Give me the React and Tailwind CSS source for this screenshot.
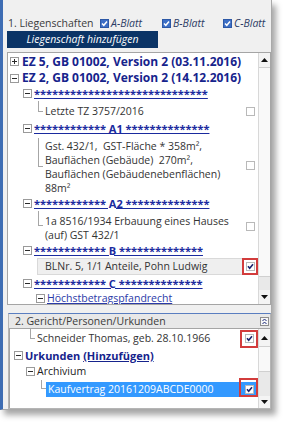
import React from 'react';

function Exp({ minus }) {
  return (
    <svg width="9" height="9" viewBox="0 0 9 9" className="block shrink-0">
      <rect x="0.5" y="0.5" width="8" height="8" fill="#ffffff" stroke="#9a9a9a" />
      <line x1="2" y1="4.5" x2="7" y2="4.5" stroke="#2a2a2a" />
      {!minus && <line x1="4.5" y1="2" x2="4.5" y2="7" stroke="#2a2a2a" />}
    </svg>
  );
}

function Cb({ checked }) {
  return (
    <svg width="9" height="9" viewBox="0 0 9 9" className="block shrink-0">
      <rect x="0.5" y="0.5" width="8" height="8" fill="#ffffff" stroke="#b9b9b9" />
      {checked && (
        <path d="M2 4.3 L3.7 6.3 L7 2.3" fill="none" stroke="#18246e" strokeWidth="1.6" />
      )}
    </svg>
  );
}

function BlueCb() {
  return (
    <svg width="9" height="9" viewBox="0 0 9 9" className="block shrink-0">
      <rect x="0.5" y="0.5" width="8" height="8" fill="#3d6fc6" stroke="#2c58a6" />
      <path d="M2 4.5 L3.8 6.3 L7 2.6" fill="none" stroke="#ffffff" strokeWidth="1.5" />
    </svg>
  );
}

function Arrow({ up }) {
  return (
    <svg width="7" height="4" viewBox="0 0 7 4" className="block">
      {up ? <polygon points="0,4 7,4 3.5,0" fill="#111" /> : <polygon points="0,0 7,0 3.5,4" fill="#111" />}
    </svg>
  );
}

function Collapse() {
  return (
    <svg width="9" height="9" viewBox="0 0 9 9" className="block">
      <rect x="0.5" y="0.5" width="8" height="8" fill="#f7f7f7" stroke="#8e8e8e" />
      <path d="M2.5 4 L4.5 2 L6.5 4 M2.5 7 L4.5 5 L6.5 7" fill="none" stroke="#1c2a7a" strokeWidth="1" />
    </svg>
  );
}

const stars = (n) => '*'.repeat(n);

function StarRow({ label, h }) {
  return (
    <div className={`flex items-center pl-[15px] ${h}`}>
      <Exp minus />
      <span className="ml-[2px] font-bold text-[11px] leading-none text-[#1a2a9e] underline decoration-1 underline-offset-[0px] whitespace-pre">
        {label}
      </span>
    </div>
  );
}

export default function App() {
  return (
    <div className="w-[285px] h-[429px] bg-white font-['Open_Sans',sans-serif] text-[10.5px]">
      <div className="w-[272px] h-[410px] flex flex-col bg-[#f0f0f0] border-l-[3px] border-l-[#3e6db3] border-r border-r-[#a9a9a9] border-b border-b-[#a9a9a9] shadow-[4px_5px_6px_rgba(0,0,0,0.35)]">
        {/* header */}
        <div className="mt-[16px] h-[14px] flex items-center pl-[5px] text-[#3b3b3b] leading-none">
          <span className="w-[92px]">1. Liegenschaften</span>
          <div className="w-[62px] flex items-center gap-[2px]">
            <BlueCb />
            <span className="italic text-[#2d3d66]">A-Blatt</span>
          </div>
          <div className="w-[61px] flex items-center gap-[2px]">
            <BlueCb />
            <span className="italic text-[#2d3d66]">B-Blatt</span>
          </div>
          <div className="flex items-center gap-[2px]">
            <BlueCb />
            <span className="italic text-[#2d3d66]">C-Blatt</span>
          </div>
        </div>

        <div className="mt-[1px] ml-[4px] w-[151px] h-[17px] bg-[#0b3466] text-white italic flex items-center justify-center leading-none">
          Liegenschaft hinzufügen
        </div>

        {/* panel 1 */}
        <div className="mt-[4px] ml-[4px] w-[264px] h-[253px] bg-white border border-[#a5a5a5] flex overflow-hidden">
          <div className="w-[250px] flex flex-col text-[#333] overflow-hidden">
            <div className="h-[17px] shrink-0 flex items-center pl-[2px]">
              <Exp />
              <span className="ml-[3px] font-bold text-[12px] leading-none text-[#16238c] whitespace-nowrap">
                EZ 5, GB 01002, Version 2 (03.11.2016)
              </span>
            </div>
            <div className="h-[16px] shrink-0 flex items-center pl-[2px]">
              <Exp minus />
              <span className="ml-[3px] font-bold text-[12px] leading-none text-[#16238c] whitespace-nowrap">
                EZ 2, GB 01002, Version 2 (14.12.2016)
              </span>
            </div>
            <StarRow h="h-[15px] shrink-0" label={stars(29)} />

            <div className="h-[20px] shrink-0 flex items-center">
              <div className="w-[30px]" />
              <div className="w-[5px] h-[11px] self-start border-l border-b border-[#a6a6a6]" />
              <span className="ml-[2px] flex-1 leading-none">Letzte TZ 3757/2016</span>
              <div className="w-[18px] flex justify-end pr-[3px]">
                <Cb />
              </div>
            </div>

            <StarRow h="h-[15px] shrink-0" label={`${stars(12)} A1 ${stars(14)}`} />

            <div className="h-[59px] shrink-0 flex items-center">
              <div className="w-[30px]" />
              <div className="w-[5px] h-[29px] self-start mt-[2px] border-l border-b border-[#a6a6a6]" />
              <div className="ml-[2px] flex-1 self-start pt-[3px] leading-[14px] whitespace-pre">
                <div>Gst. 432/1,  GST-Fläche * 358m²,</div>
                <div>Bauflächen (Gebäude)  270m²,</div>
                <div>Bauflächen (Gebäudenebenflächen)</div>
                <div>88m²</div>
              </div>
              <div className="w-[18px] flex justify-end pr-[3px]">
                <Cb />
              </div>
            </div>

            <StarRow h="h-[16px] shrink-0" label={`${stars(12)} A2 ${stars(14)}`} />

            <div className="h-[31px] shrink-0 flex items-center">
              <div className="w-[30px]" />
              <div className="w-[5px] h-[15px] self-start border-l border-b border-[#a6a6a6]" />
              <div className="ml-[2px] flex-1 self-start pt-[3px] leading-[14px] whitespace-pre">
                <div>1a 8516/1934 Erbauung eines Hauses</div>
                <div>(auf) GST 432/1</div>
              </div>
              <div className="w-[18px] flex justify-end pr-[3px]">
                <Cb />
              </div>
            </div>

            <StarRow h="h-[16px] shrink-0" label={`${stars(12)} B ${stars(14)}`} />

            <div className="h-[17px] shrink-0 flex items-stretch">
              <div className="w-[29px]" />
              <div className="flex-1 bg-[#efefef] border border-r-0 border-[#d9d9d9] flex items-center pl-[7px] leading-none">
                BLNr. 5, 1/1 Anteile, Pohn Ludwig
              </div>
              <div className="w-[16px] h-[17px] border-2 border-[#d23c3c] flex items-center justify-center">
                <Cb checked />
              </div>
            </div>

            <StarRow h="h-[16px] shrink-0" label={`${stars(12)} C ${stars(14)}`} />

            <div className="h-[14px] shrink-0 flex items-center pl-[28px]">
              <Exp minus />
              <span className="ml-[2px] leading-none text-[#2b3aa8] underline underline-offset-[1px]">
                Höchstbetragspfandrecht
              </span>
            </div>
          </div>

          {/* scrollbar 1 */}
          <div className="w-[12px] flex flex-col bg-[#e9e9e9] border-l border-[#d8d8d8]">
            <div className="h-[14px] flex items-center justify-center bg-[#f4f4f4]">
              <Arrow up />
            </div>
            <div className="h-[210px] bg-[#f9f9f9] border-y border-[#d0d0d0]" />
            <div className="flex-1" />
            <div className="h-[14px] flex items-center justify-center bg-[#f4f4f4]">
              <Arrow />
            </div>
          </div>
        </div>

        {/* section 2 */}
        <div className="mt-[8px] ml-[5px] w-[263px] h-[96px] flex flex-col border border-[#b5b5b5] border-t-[#5a7ec0]">
          <div className="h-[14px] bg-[#e8e8e8] flex items-center justify-between pl-[6px] pr-[1px] text-[#3b3b3b] leading-none">
            <span>2. Gericht/Personen/Urkunden</span>
            <Collapse />
          </div>
          <div className="flex-1 bg-white border-t border-l border-[#a5a5a5] flex overflow-hidden">
            <div className="w-[248px] flex flex-col text-[#333]">
              <div className="h-[19px] shrink-0 flex items-center">
                <div className="w-[20px]" />
                <div className="w-[5px] h-[10px] self-start border-l border-b border-[#a6a6a6]" />
                <span className="ml-[2px] flex-1 leading-none">Schneider Thomas, geb. 28.10.1966</span>
                <div className="w-[18px] h-[18px] border-2 border-[#d23c3c] flex items-center justify-center">
                  <Cb checked />
                </div>
              </div>
              <div className="h-[15px] shrink-0 flex items-center pl-[4px]">
                <Exp minus />
                <span className="ml-[2px] font-bold text-[11px] leading-none text-[#16238c] whitespace-nowrap">
                  Urkunden <span className="underline underline-offset-[1px]">(Hinzufügen)</span>
                </span>
              </div>
              <div className="h-[17px] shrink-0 flex items-center pl-[16px]">
                <Exp minus />
                <span className="ml-[2px] leading-none text-[#222]">Archivium</span>
              </div>
              <div className="h-[18px] shrink-0 flex items-center relative">
                <div className="w-[31px]" />
                <div className="w-[5px] h-[9px] self-start border-l border-b border-[#a6a6a6]" />
                <div className="flex-1 h-[15px] bg-[#3399ff] flex items-center justify-between pl-[2px] pr-[4px] text-white leading-none">
                  <span>Kaufvertrag 20161209ABCDE0000</span>
                  <Cb checked />
                </div>
                <div className="absolute right-0 -top-[2px] w-[19px] h-[19px] border-2 border-[#d23c3c]" />
              </div>
            </div>
            {/* scrollbar 2 */}
            <div className="w-[12px] flex flex-col bg-[#e9e9e9] border-l border-[#d8d8d8]">
              <div className="h-[17px] flex items-center justify-center bg-[#f4f4f4]">
                <Arrow up />
              </div>
              <div className="h-[26px] bg-[#f9f9f9] border-y border-[#d0d0d0]" />
              <div className="flex-1" />
              <div className="h-[12px] flex items-center justify-center bg-[#f4f4f4]">
                <Arrow />
              </div>
            </div>
          </div>
        </div>
      </div>
    </div>
  );
}
